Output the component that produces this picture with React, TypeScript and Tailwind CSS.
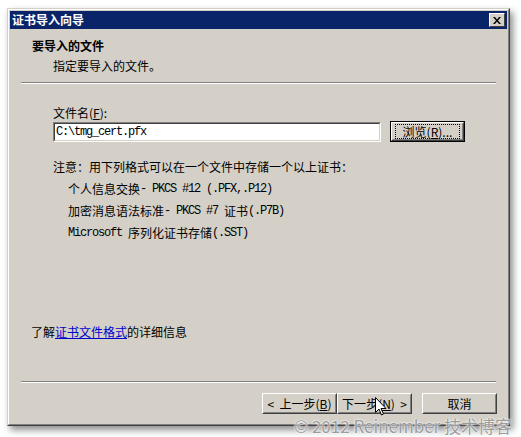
import React from 'react';

const cjk = "font-['Noto_Sans_CJK_SC',sans-serif]";
const mono = "font-['Liberation_Mono','Noto_Sans_CJK_SC',monospace] text-[12px] tracking-[-1.2px]";

// raised Win2000-style button
const Button = ({ children, className = '', focused = false }: { children: React.ReactNode; className?: string; focused?: boolean }) => (
  <div className={`h-[21px] ${focused ? 'border border-black' : ''} ${className}`}>
    <div className="h-full border border-t-white border-l-white border-r-[#404040] border-b-[#404040]">
      <div className="h-full flex items-center justify-center border border-t-[#d4d0c8] border-l-[#d4d0c8] border-r-[#808080] border-b-[#808080]">
        {children}
      </div>
    </div>
  </div>
);

const Separator = () => <div className="mx-[11px] h-[2px] border-t border-t-[#808080] border-b border-b-white" />;

const Line = ({ children, className = '' }: { children: React.ReactNode; className?: string }) => (
  <div className={`h-[22px] flex items-center whitespace-pre ${className}`}>{children}</div>
);

const App = () => {
  return (
    <div className={`relative w-[521px] h-[437px] bg-white overflow-hidden text-[12px] text-black ${cjk}`}>
      <div className="pt-[8px] pl-[7px]">
        {/* window frame */}
        <div className="w-[503px] h-[418px] border border-t-[#d4d0c8] border-l-[#d4d0c8] border-r-[#404040] border-b-[#404040] shadow-[3px_4px_7px_rgba(0,0,0,0.45)]">
          <div className="h-full border border-t-white border-l-white border-r-[#808080] border-b-[#808080] bg-[#d4d0c8] p-[1px] flex flex-col">
            {/* title bar */}
            <div className="h-[18px] shrink-0 bg-[#0a246a] flex items-center justify-between pl-[2px] pr-[2px]">
              <span className="text-white font-bold leading-4">证书导入向导</span>
              <div className="w-[16px] h-[14px] bg-[#d4d0c8] border border-t-white border-l-white border-r-[#404040] border-b-[#404040] flex items-center justify-center">
                <svg width="8" height="7" viewBox="0 0 8 7">
                  <path d="M0 0h2l2 2.4 2-2.4h2l-3 3.5 3 3.5h-2l-2-2.4-2 2.4h-2l3-3.5z" fill="#000" />
                </svg>
              </div>
            </div>

            {/* header */}
            <div className="h-[53px] shrink-0 pt-[9px]">
              <div className="h-[16px] pl-[22px] font-bold leading-4">要导入的文件</div>
              <div className="h-[16px] pl-[43px] mt-[4px] leading-4">指定要导入的文件。</div>
            </div>
            <Separator />

            {/* content */}
            <div className="h-[240px] shrink-0 pl-[43px]">
              <div className="mt-[21px] h-[16px] flex items-center">
                文件名(<span className="underline">F</span>):
              </div>
              <div className="h-[21px] flex items-center">
                <div className="w-[328px] h-[20px] border border-t-[#808080] border-l-[#808080] border-r-white border-b-white">
                  <div className="h-full bg-white border border-t-[#404040] border-l-[#404040] border-r-[#d4d0c8] border-b-[#d4d0c8] flex items-center pl-[1px]">
                    <span className={`${mono} leading-4`}>C:\tmg_cert.pfx</span>
                  </div>
                </div>
                <Button focused className="ml-[9px] w-[75px]">
                  <span className="leading-4 h-[15px] flex items-center justify-center outline outline-1 outline-dotted outline-black -outline-offset-1 w-[65px]">
                    浏览(<span className="underline">R</span>)...
                  </span>
                </Button>
              </div>

              <div className="mt-[14px]">
                <Line>注意：用下列格式可以在一个文件中存储一个以上证书：</Line>
                <Line className="pl-[15px]">
                  个人信息交换<span className={mono}>- PKCS #12 (.PFX,.P12)</span>
                </Line>
                <Line className="pl-[15px]">
                  加密消息语法标准<span className={mono}>- PKCS #7 </span>证书<span className={mono}>(.P7B)</span>
                </Line>
                <Line className="pl-[15px]">
                  <span className={mono}>Microsoft </span>序列化证书存储<span className={mono}>(.SST)</span>
                </Line>
              </div>
            </div>

            <div className="h-[16px] shrink-0 pl-[21px] flex items-center">
              了解<span className="text-[#0000cc] underline">证书文件格式</span>的详细信息
            </div>

            <div className="mt-[41px] shrink-0">
              <Separator />
            </div>

            <div className="mt-[10px] shrink-0 flex justify-end pr-[10px]">
              <Button className="w-[75px]">
                <span className="leading-4 whitespace-pre">&lt;  上一步(<span className="underline">B</span>)</span>
              </Button>
              <Button className="w-[75px]">
                <span className="leading-4 whitespace-pre">下一步(<span className="underline">N</span>)  &gt;</span>
              </Button>
              <Button className="ml-[10px] w-[75px]">
                <span className="leading-4">取消</span>
              </Button>
            </div>
          </div>
        </div>
      </div>

      {/* mouse cursor */}
      <svg className="absolute left-[375px] top-[397px]" width="12" height="19" viewBox="0 0 12 19">
        <path d="M0.5 0.5v15l3.5-3.5 2.5 6 2-1-2.5-5.5h5z" fill="#fff" stroke="#000" strokeWidth="1" />
      </svg>

      {/* watermark */}
      <div className="absolute right-[9px] top-[415px] text-[17px] leading-[22px] text-[#9c9c9c] [text-shadow:0_0_2px_#fff,0_0_2px_#fff]">
        © 2012 Reinember 技术博客
      </div>
    </div>
  );
};

export default App;
